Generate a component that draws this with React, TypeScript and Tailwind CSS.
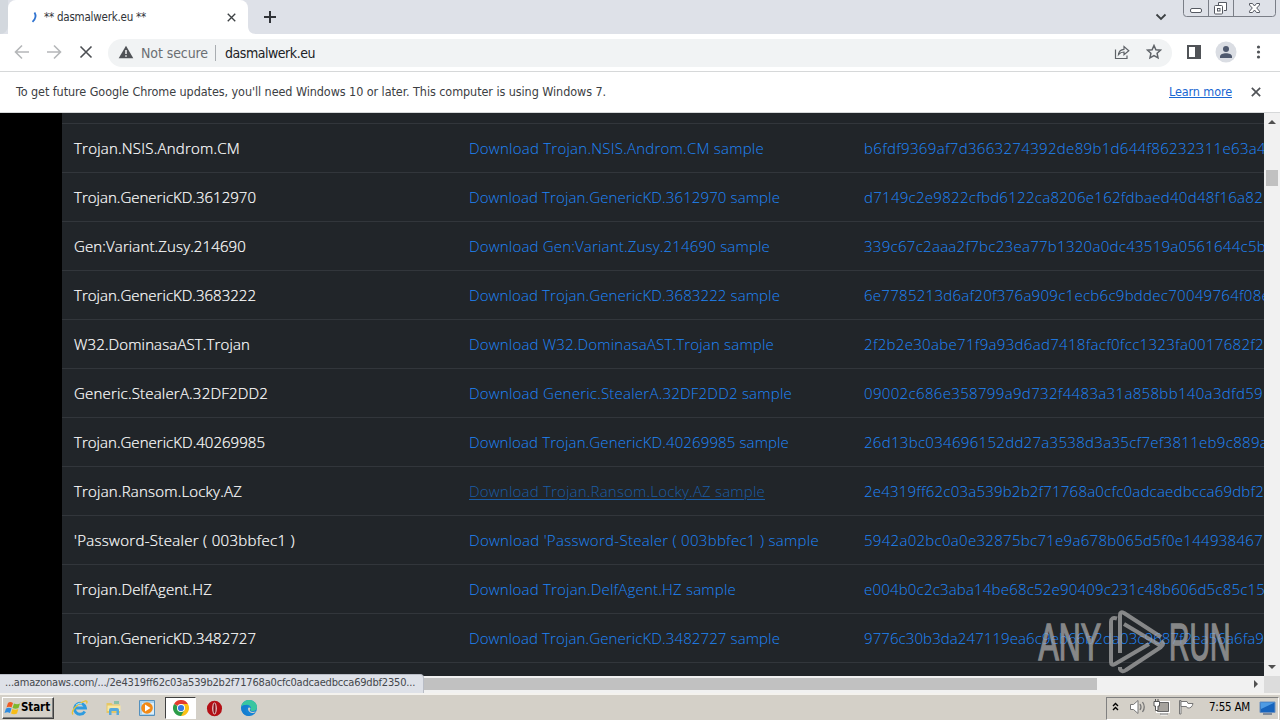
import { useLayoutEffect, useRef, useState } from "react";

const ROWS: [string, number, number, string, number][] = [
  ["Trojan.NSIS.Androm.CM", 166, 295, "b6fdf9369af7d3663274392de89b1d644f86232311e63a4", 402],
  ["Trojan.GenericKD.3612970", 182, 311, "d7149c2e9822cfbd6122ca8206e162fdbaed40d48f16a82", 399],
  ["Gen:Variant.Zusy.214690", 172, 301, "339c67c2aaa2f7bc23ea77b1320a0dc43519a0561644c5b", 402],
  ["Trojan.GenericKD.3683222", 182, 311, "6e7785213d6af20f376a909c1ecb6c9bddec70049764f08e", 406],
  ["W32.DominasaAST.Trojan", 176, 305, "2f2b2e30abe71f9a93d6ad7418facf0fcc1323fa0017682f2", 400],
  ["Generic.StealerA.32DF2DD2", 194, 323, "09002c686e358799a9d732f4483a31a858bb140a3dfd59", 399],
  ["Trojan.GenericKD.40269985", 191, 320, "26d13bc034696152dd27a3538d3a35cf7ef3811eb9c889a", 404],
  ["Trojan.Ransom.Locky.AZ", 168, 296, "2e4319ff62c03a539b2b2f71768a0cfc0adcaedbcca69dbf2", 400],
  ["'Password-Stealer ( 003bbfec1 )", 221, 350, "5942a02bc0a0e32875bc71e9a678b065d5f0e144938467", 399],
  ["Trojan.DelfAgent.HZ", 138, 267, "e004b0c2c3aba14be68c52e90409c231c48b606d5c85c15", 401],
  ["Trojan.GenericKD.3482727", 182, 311, "9776c30b3da247119ea6c9eb66b2da03c9687f2ea56a6fa9", 400],
];

/* Spreads the letter spacing so that the text takes the given width. */
function Fit({ text, width, className = "" }: { text: string; width: number; className?: string }) {
  const ref = useRef<HTMLSpanElement>(null);
  const [spacing, setSpacing] = useState(0);
  useLayoutEffect(() => {
    const el = ref.current;
    if (!el) return;
    const natural = el.getBoundingClientRect().width - spacing * text.length;
    setSpacing((width - natural) / text.length);
  }, [text, width]);
  return (
    <span ref={ref} className={`inline-block shrink-0 whitespace-pre ${className}`} style={{ letterSpacing: spacing }}>
      {text}
    </span>
  );
}

function Cross({ className }: { className: string }) {
  return (
    <svg viewBox="0 0 12 12" className={className} fill="none" stroke="currentColor">
      <path d="M1 1 11 11M11 1 1 11" />
    </svg>
  );
}

function TabStrip() {
  return (
    <div className="flex h-[34px] shrink-0 items-end bg-[#dee1e8]">
      <div className="h-[34px] w-2 shrink-0 rounded-br-lg bg-[#d3d8de]" />
      <div className="flex h-[34px] w-[240px] shrink-0 items-center rounded-t-lg bg-white pl-[17px] pr-[12px]">
        <svg viewBox="0 0 16 16" className="mr-[3px] h-4 w-4" fill="none">
          <path d="M9.500 3.500C11 6 10.800 9.800 7.500 12.800" stroke="#2f73d0" strokeWidth="1.800" />
        </svg>
        <Fit text="** dasmalwerk.eu **" width={102} className="pt-px text-[11.5px] text-[#303338]" />
        <Cross className="ml-auto h-[9px] w-[9px] stroke-[1.8] text-[#3c4043]" />
      </div>
      <svg viewBox="0 0 40 34" className="h-[34px] w-10 shrink-0" fill="none">
        <path d="M0 26v8h8C3 34 0 31 0 26Z" fill="#fff" />
        <path d="M22 11v12M16 17h12" stroke="#303338" strokeWidth="2" />
      </svg>
      <div className="flex h-[34px] flex-1 items-start justify-end">
        <svg viewBox="0 0 12 8" className="mr-[16px] mt-[13px] h-2 w-3" fill="none" stroke="#3c4043" strokeWidth="1.8">
          <path d="m1.500 1.500 4.500 4.500 4.500-4.500" />
        </svg>
        <svg viewBox="0 0 97 18" className="h-[18px] w-[97px]" fill="none" stroke="#7a7e87">
          <path d="M.5-1v14.500Q.5 16.500 3.500 16.500h86Q92.500 16.500 92.500 13.500V-1M25.500 0v16M50.500 0v16" />
          <rect x="7.500" y="8.500" width="11" height="4" rx="1.500" fill="#fff" stroke="#555962" />
          <path d="M35.500 6V2.500h8v8H41" fill="#fff" stroke="#555962" />
          <rect x="31.500" y="5.500" width="8" height="8.500" rx="1" fill="#fff" stroke="#555962" />
          <rect x="34.500" y="8.500" width="2.500" height="2.500" stroke="#555962" />
          <path d="M66.500 3.500h3l2 2.500 2-2.500h3v1.500L73.700 8l2.800 3.200v1.300h-3l-2-2.500-2 2.500h-3v-1.300L69.300 8l-2.800-3Z" fill="#fff" stroke="#555962" />
        </svg>
      </div>
    </div>
  );
}

function Toolbar() {
  return (
    <div className="flex h-[38px] shrink-0 items-center border-b border-[#d6d8d9] bg-white">
      <svg viewBox="0 0 108 37" className="h-[37px] w-[108px] shrink-0" fill="none" strokeWidth="1.6">
        <path d="M29 18H16M22 11.500 15.500 18l6.500 6.500" stroke="#b5b7b9" />
        <path d="M47 18h13M54 11.500l6.500 6.500-6.500 6.500" stroke="#b5b7b9" />
        <path d="m80.500 12.500 11 11M91.500 12.500l-11 11" stroke="#4c4f53" />
      </svg>
      <div className="flex h-7 w-[1064px] shrink-0 items-center rounded-full bg-[#f1f3f4] pl-2.5 pr-[9px]">
        <svg viewBox="0 0 16 14" className="mb-px h-[14px] w-4">
          <path d="M8 .8 15.300 13.200H.7Z" fill="#505357" />
          <path d="M8 5v4M8 10.300v1.500" stroke="#fff" strokeWidth="1.400" />
        </svg>
        <Fit text="Not secure" width={67} className="ml-[7px] pt-px text-[14px] text-[#6b6f73]" />
        <div className="ml-[7px] mr-[9px] h-4 w-px bg-[#a9adb1]" />
        <Fit text="dasmalwerk.eu" width={90} className="pt-px text-[14px] text-[#202124]" />
        <svg viewBox="0 0 16 16" className="ml-auto mb-0.5 h-4 w-4" fill="none" stroke="#5f6368" strokeWidth="1.200">
          <path d="M1.500 5.500v9h11.500V11.500" />
          <path d="M4.500 10.500C5 7 7 5.500 10 5.300V2.500l4.800 4.200L10 10.800V8C7.500 8 6 8.800 4.500 10.500Z" />
        </svg>
        <svg viewBox="0 0 16 16" className="mb-px ml-4 mr-[1px] h-4 w-4" fill="none" stroke="#5f6368" strokeWidth="1.500">
          <path d="m8 1.500 1.900 4.200 4.600.5-3.400 3.100.9 4.500L8 11.500l-4 2.300.9-4.500L1.500 6.200l4.600-.5Z" />
        </svg>
      </div>
      <svg viewBox="0 0 108 37" className="h-[37px] w-[108px] shrink-0">
        <rect x="16" y="12" width="12" height="12" fill="none" stroke="#505357" strokeWidth="2" />
        <path d="M23 12h5v12h-5z" fill="#505357" />
        <circle cx="54" cy="18" r="10.500" fill="#dadde3" />
        <circle cx="54" cy="15" r="3" fill="#4f596e" />
        <path d="M48 24v-1.500c0-4.500 12-4.500 12 0V24Z" fill="#4f596e" />
        <g fill="#505357"><circle cx="86.500" cy="13" r="1.600" /><circle cx="86.500" cy="18" r="1.600" /><circle cx="86.500" cy="23" r="1.600" /></g>
      </svg>
    </div>
  );
}

function Watermark() {
  return (
    <svg viewBox="0 0 200 70" className="absolute right-[46px] top-[492px] h-[70px] w-[200px]" opacity=".76">
      <g fill="#a6a6a6" stroke="#a6a6a6" strokeWidth="1.600" fontFamily="Liberation Sans" fontSize="52">
        <text transform="translate(4.500 54.500) scale(.585 1)">ANY</text>
        <text transform="translate(135 54.500) scale(.545 1)">RUN</text>
      </g>
      <g fill="none" stroke="#a6a6a6" strokeWidth="4" strokeLinejoin="round">
        <path d="M83 13.500Q77 11.500 77 17v40q0 4 4 2L115 39" />
        <path d="M86 48V10q0-4 4-2l37 24" />
        <path d="m90 19 37 22M86 62v2q2 4 6 1l35-23q4-3 0-6" />
      </g>
    </svg>
  );
}

function Page() {
  return (
    <div className="relative flex h-[563px] shrink-0 overflow-hidden bg-black">
      <div className="ml-[62px] w-[1202px] shrink-0 overflow-hidden bg-[#212529] font-['Open_Sans',sans-serif] text-[15px] font-light">
        <div className="h-[11px] border-b border-[#32363b]" />
        {ROWS.map(([name, nameW, linkW, hash, hashW], i) => (
          <div key={name} className="flex h-[49px] items-center border-b border-[#32363b] pl-3 text-[#1f86fa]">
            <div className="w-[395px] shrink-0 text-white [-webkit-text-stroke:0.2px_white]"><Fit text={name} width={nameW} /></div>
            <div className="w-[395px] shrink-0">
              <Fit
                text={`Download ${name} sample`}
                width={linkW}
                className={i === 7 ? "text-[#1a5da6] underline underline-offset-2" : ""}
              />
            </div>
            <Fit text={hash} width={hashW} />
          </div>
        ))}
      </div>
      <div className="flex w-4 shrink-0 flex-col items-center bg-[#f1f1f1]">
        <svg viewBox="0 0 16 16" className="h-4 w-4" fill="#505050"><path d="M4 11h8L8 7Z" /></svg>
        <div className="mt-[41px] h-4 w-3 bg-[#c1c1c1]" />
        <svg viewBox="0 0 16 16" className="mb-px mt-auto h-4 w-4" fill="#505050"><path d="M4 6h8l-4 4Z" /></svg>
      </div>
      <Watermark />
    </div>
  );
}

function BottomScroll() {
  return (
    <div className="relative z-10 flex h-[17px] shrink-0 items-center">
      <div className="-mt-[2px] flex h-[19px] w-[424px] shrink-0 items-center self-start rounded-tr-[4px] border-r border-t border-[#b9bdc6] bg-[#dee1e8] pl-[5px]">
        <Fit
          text="...amazonaws.com/.../2e4319ff62c03a539b2b2f71768a0cfc0adcaedbcca69dbf2350..."
          width={410}
          className="pb-px text-[11px] text-[#44474c]"
        />
      </div>
      <div className="flex h-[17px] flex-1 items-center justify-between bg-[#f1f1f1]">
        <div className="mb-px h-3 w-[673px] shrink-0 bg-[#c1c1c1]" />
        <svg viewBox="0 0 16 16" className="mb-px h-4 w-4" fill="#505050"><path d="M6 4v8l4-4Z" /></svg>
      </div>
      <div className="h-[17px] w-4 bg-[#dcdcdc]" />
    </div>
  );
}

function Taskbar() {
  return (
    <div className="flex h-7 shrink-0 items-center border-t-2 border-[#f4f2ee] bg-[#d4d0c8] text-black">
      <div className="ml-0.5 flex h-[22px] w-[52px] shrink-0 items-center border border-b-[#404040] border-l-white border-r-[#404040] border-t-white pl-px shadow-[inset_-1px_-1px_0_#808080]">
        <svg viewBox="0 0 17 16" className="h-4 w-[17px] shrink-0">
          <path d="M4 3Q6 1 9 3L7.500 7.500Q5 6 2.500 7.500Z" fill="#ef5b23" />
          <path d="M10 3.500q3 1.500 6 0l-1.500 4.500q-3 1.500-6 0Z" fill="#7eb82c" />
          <path d="M2 8.500q3-1.500 5.500 0L6 13Q3.500 11.500.5 13Z" fill="#2e8be0" />
          <path d="M8.300 9q3 1.500 6 0L13 13.500q-3 1.500-6 0Z" fill="#f7bd19" />
        </svg>
        <Fit text="Start" width={29} className="text-[11.5px] font-bold" />
      </div>
      <div className="ml-[17px] flex items-center">
        <svg viewBox="0 0 18 18" className="h-[18px] w-[18px]" fill="none">
          <path d="M13.800 12.500A5.500 5.500 0 1 1 14.500 9H5" stroke="#2e9bdf" strokeWidth="2.800" />
          <path d="M2 15.500C-1 12 7 4 14 2q3-.5 1.500 2.500" stroke="#e8c234" strokeWidth="1.300" />
          <path d="M5 6q3-3 6-1" stroke="#9bddff" />
        </svg>
        <svg viewBox="0 0 18 18" className="ml-4 h-[18px] w-[18px]">
          <path d="M1.500 4h5l1 1.500H15V14H1.500Z" fill="#e6c765" />
          <path d="M2.500 6.500h13V12h-13Z" fill="#f8e8a4" />
          <path d="M4 16v-5q0-2 2-2h6q2 0 2 2v5h-2.500v-4h-5v4Z" fill="#55a9dd" />
          <path d="M9 2h5v3H9Z" fill="#8ac1a5" />
        </svg>
        <svg viewBox="0 0 18 18" className="ml-[15px] h-[18px] w-[18px]">
          <path d="M1.500 1.500h15v15h-15Z" fill="#a9d2ed" stroke="#5490bd" />
          <path d="M4 4h12v11H4Z" fill="#dceef9" />
          <circle cx="9" cy="9" r="5.800" fill="#f28a16" />
          <path d="m7 5.500 5.500 3.500L7 12.500Z" fill="#fff" />
        </svg>
        <div className="ml-[9px] flex h-[22px] w-[31px] items-center justify-center border border-b-white border-l-[#404040] border-r-white border-t-[#404040] bg-white">
          <svg viewBox="0 0 18 18" className="h-4 w-4">
            <path d="M9 9 1.200 4.500A9 9 0 0 1 16.800 4.500Z" fill="#e23b2e" />
            <path d="M9 9V4.500h7.800A9 9 0 0 1 9 18Z" fill="#fbc116" />
            <path d="M9 9 1.200 4.500A9 9 0 0 0 9 18l4-7Z" fill="#2d9d49" />
            <circle cx="9" cy="9" r="4.500" fill="#fff" />
            <circle cx="9" cy="9" r="3.500" fill="#367be2" />
          </svg>
        </div>
        <svg viewBox="0 0 18 18" className="ml-[10px] h-[17px] w-[17px]">
          <ellipse cx="9" cy="9" rx="8" ry="8.300" fill="#b41016" />
          <ellipse cx="9" cy="9" rx="2.400" ry="6.300" fill="#f2dddd" />
          <ellipse cx="9" cy="9" rx="1.200" ry="5.500" fill="#851018" />
        </svg>
        <svg viewBox="0 0 18 18" className="ml-[17px] h-[18px] w-[18px]">
          <circle cx="9" cy="9" r="8" fill="#1684d6" />
          <path d="M1.200 8C2 3 5.500 1 9 1c5 0 8 3.500 8 7 0 3-2.300 4-4.500 4C10 12 10 10.500 11 9c0-3-5-5-9.800-1Z" fill="#3ac6a0" />
          <path d="M8 7.500c-4 2-3 8 3 9.300-6 1.200-9.800-3-9.800-8.800C3.500 5.500 6.500 5.500 8 7.500Z" fill="#167ed0" />
          <path d="M10.500 9.500C8.500 12 11 13.800 16 12.500c-3 3-8 1-8-2.500 0-2 2-2 2.500-.5Z" fill="#d4d0c8" />
        </svg>
      </div>
      <div className="ml-auto mr-px flex h-[23px] w-[173px] shrink-0 items-center border border-b-white border-l-[#808080] border-r-white border-t-[#808080]">
        <svg viewBox="0 0 94 20" className="mb-0.5 h-5 w-[94px] shrink-0" fill="none">
          <path d="m6 9 2.500-2.500L11 9M6 13l2.500-2.500L11 13" stroke="#000" strokeWidth="1.400" />
          <path d="M23.500 7.500h3L31 3.500v13l-4.500-4h-3Z" fill="#fff" stroke="#777" />
          <path d="M33 7q2 3 0 6M35.500 5q3.500 5 0 10" stroke="#777" strokeWidth="1.300" />
          <path d="M50.500 5.500h11v9h-11ZM53.500 17h7" stroke="#fff" strokeWidth="3" />
          <path d="M50.500 5.500h11v9h-11Z" fill="#a6a39e" stroke="#656565" />
          <path d="M53 17h8" stroke="#656565" />
          <path d="M47 4.500h5.500V9H51v4.500h-2.500V9H47ZM48.500 2v3M51 2v3" fill="#fff" stroke="#555" />
          <path d="M72.500 17V3.500h1.500V17Z" fill="#fff" stroke="#777" />
          <path d="M74 4.500h6l1 2h5q-1 5-5.500 4.500l-1-1.500H74Z" fill="#fff" stroke="#777" />
        </svg>
        <Fit text="7:55 AM" width={41} className="ml-2 text-[11.5px]" />
        <svg viewBox="0 0 17 16" className="mb-px ml-[9px] h-4 w-[17px] shrink-0">
          <path d="M1 2h15v10.500H1Z" fill="#1764bd" stroke="#6d91bf" />
          <path d="M1.500 2.500h14L2 9Z" fill="#4e9be4" />
          <path d="M4 14h9" stroke="#64748b" strokeWidth="1.500" />
        </svg>
      </div>
    </div>
  );
}

export default function App() {
  return (
    <div className="flex h-[720px] w-[1280px] flex-col overflow-hidden bg-white font-['DejaVu_Sans_Condensed','DejaVu_Sans',sans-serif] leading-normal">
      <TabStrip />
      <Toolbar />
      <div className="flex h-[41px] shrink-0 items-center border-b border-[#d6d8d9] bg-white pl-4 pr-[19px] text-[12.5px]">
        <Fit
          text="To get future Google Chrome updates, you'll need Windows 10 or later. This computer is using Windows 7."
          width={590}
          className="text-[#3c4043]"
        />
        <Fit text="Learn more" width={63} className="ml-auto text-[#1967d2] underline" />
        <Cross className="ml-[19px] h-[10px] w-[10px] stroke-2 text-[#505357]" />
      </div>
      <Page />
      <BottomScroll />
      <Taskbar />
    </div>
  );
}
